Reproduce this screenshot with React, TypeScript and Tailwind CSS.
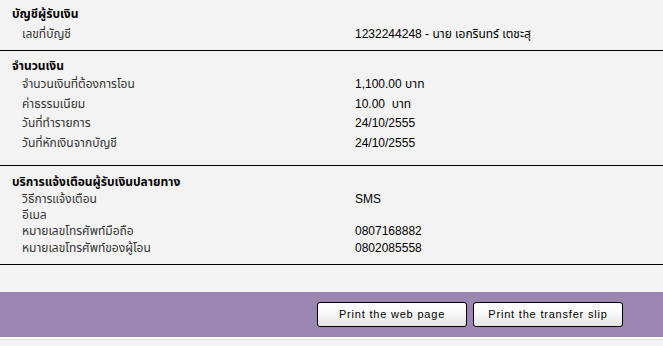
const thai = "font-['Tahoma','Liberation_Sans','Noto_Sans_Thai','Noto_Sans',sans-serif]";

type Row = { label: string; value?: string };

const section2: Row[] = [
  { label: "จำนวนเงินที่ต้องการโอน", value: "1,100.00 บาท" },
  { label: "ค่าธรรมเนียม", value: "10.00  บาท" },
  { label: "วันที่ทำรายการ", value: "24/10/2555" },
  { label: "วันที่หักเงินจากบัญชี", value: "24/10/2555" },
];

const section3: Row[] = [
  { label: "วิธีการแจ้งเตือน", value: "SMS" },
  { label: "อีเมล" },
  { label: "หมายเลขโทรศัพท์มือถือ", value: "0807168882" },
  { label: "หมายเลขโทรศัพท์ของผู้โอน", value: "0802085558" },
];

function InfoRow({ row, lh }: { row: Row; lh: string }) {
  return (
    <div className={`grid grid-cols-[333px_1fr] pl-[22px] ${lh}`}>
      <span className="text-[#333]">{row.label}</span>
      <span className="whitespace-pre text-black">{row.value ?? ""}</span>
    </div>
  );
}

function PrintButton({ label }: { label: string }) {
  return (
    <button className="h-[25px] w-[150px] rounded-[3px] border border-black bg-gradient-to-b from-white via-[#f7f7f7] to-[#e4e4e4] font-['Liberation_Sans',sans-serif] text-[11px] tracking-[0.8px] text-black">
      {label}
    </button>
  );
}

export default function App() {
  return (
    <div className={`flex h-[346px] w-[663px] flex-col bg-[#f3f3f3] text-[12px] ${thai}`}>
      <section className="border-b border-black pb-[6px] pt-[4px]">
        <h3 className="pl-[12px] text-[12px] font-bold leading-[20px] text-black">บัญชีผู้รับเงิน</h3>
        <InfoRow row={{ label: "เลขที่บัญชี", value: "1232244248 - นาย เอกรินทร์ เตชะสุ" }} lh="leading-[20px]" />
      </section>

      <section className="border-b border-black pb-[11px] pt-[6px]">
        <h3 className="pl-[12px] text-[12px] font-bold leading-[18px] text-black">จำนวนเงิน</h3>
        {section2.map((row) => (
          <InfoRow key={row.label} row={row} lh="leading-[19.67px]" />
        ))}
      </section>

      <section className="border-b border-black pb-[8px] pt-[7px]">
        <h3 className="pl-[12px] text-[12px] font-bold leading-[18px] text-black">
          บริการแจ้งเตือนผู้รับเงินปลายทาง
        </h3>
        {section3.map((row) => (
          <InfoRow key={row.label} row={row} lh="leading-[16.33px]" />
        ))}
      </section>

      <div className="h-[27px]" />

      <div className="flex h-[45px] items-start justify-end gap-[6px] bg-[#9b86b0] pr-[40px] pt-[10px]">
        <PrintButton label="Print the web page" />
        <PrintButton label="Print the transfer slip" />
      </div>
      <div className="h-[2px] bg-white" />
      <div className="h-[1px] bg-[#e2e2e2]" />
    </div>
  );
}
